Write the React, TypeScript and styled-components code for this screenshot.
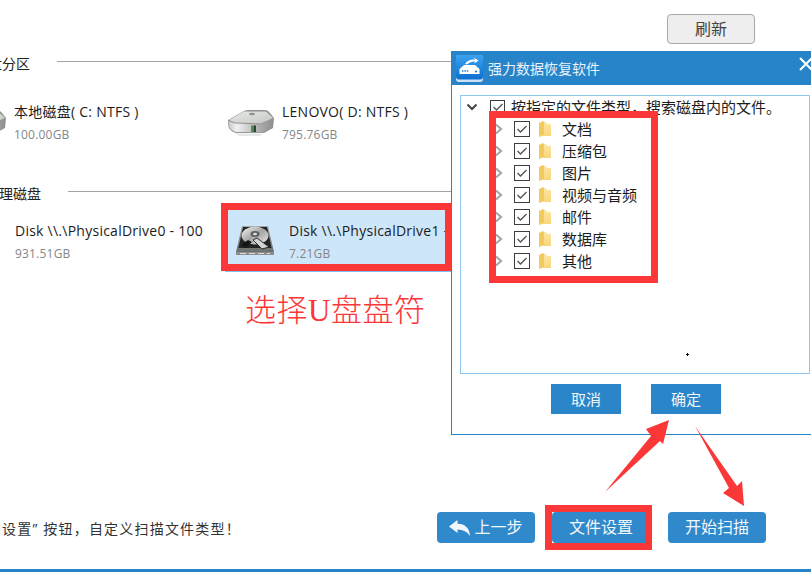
import React from "react";
import styled, { createGlobalStyle } from "styled-components";

const GlobalStyle = createGlobalStyle`
  html, body { margin: 0; padding: 0; background: #fff; }
  * { box-sizing: border-box; }
`;

const FONT = `"Open Sans", "Noto Sans CJK SC", sans-serif`;
const BLUE = "#2884c8";
const RED = "#fc3737";

const Page = styled.div`
  position: relative;
  width: 811px;
  height: 572px;
  overflow: hidden;
  display: flex;
  flex-direction: column;
  background: #fff;
  font-family: ${FONT};
  color: #222;
`;

const TopBar = styled.div`
  height: 44px;
  padding: 14px 56px 0 0;
  display: flex;
  justify-content: flex-end;
`;

const RefreshButton = styled.button`
  width: 88px;
  height: 30px;
  padding: 0;
  border: 1px solid #a8a8a8;
  border-radius: 4px;
  background: #eeeeee;
  color: #444;
  font: 16px/26px ${FONT};
`;

const SectionHead = styled.div<{ $top: number; $inset: number }>`
  margin: ${(p) => p.$top}px 0 0 ${(p) => p.$inset}px;
  height: 18px;
  display: flex;
  gap: 27px;
  font-size: 14px;
  line-height: 18px;
  white-space: nowrap;
`;

const SectionRule = styled.div`
  flex: 1;
  height: 1px;
  margin-top: 6px;
  background: #a4a4a4;
`;

const DriveGrid = styled.div<{ $top: number; $inset: number; $columns: string }>`
  margin: ${(p) => p.$top}px 0 0 ${(p) => p.$inset}px;
  display: grid;
  grid-template-columns: ${(p) => p.$columns};
`;

const VolumeItem = styled.div`
  display: flex;
  align-items: flex-start;
  gap: 8px;
  height: 44px;
`;

const DiskItem = styled.div<{ $selected?: boolean }>`
  display: flex;
  align-items: flex-start;
  gap: 15px;
  height: 63px;
  padding: 10px 0 0 10px;
  border: 1px solid ${(p) => (p.$selected ? "#7fc0f0" : "transparent")};
  background: ${(p) => (p.$selected ? "#cee6f9" : "transparent")};
`;

const DriveIconSlot = styled.div<{ $top: number }>`
  flex: none;
  display: flex;
  margin-top: ${(p) => p.$top}px;
`;

const DriveText = styled.div`
  white-space: nowrap;
`;

const DriveName = styled.div`
  font-size: 14px;
  line-height: 22px;
  letter-spacing: 0.25px;
  color: #1c1c1c;
`;

const DriveSize = styled.div`
  margin-top: 1px;
  font-size: 12px;
  line-height: 22px;
  letter-spacing: 0.2px;
  color: #868686;
`;

const Footer = styled.div`
  margin-top: auto;
  height: 31px;
  padding: 0 45px 0 2px;
  display: flex;
  align-items: center;
`;

const Hint = styled.div`
  font-size: 14px;
  letter-spacing: 1.2px;
  color: #333;
  white-space: nowrap;
`;

const FooterButtons = styled.div`
  margin-left: auto;
  display: flex;
  gap: 17px;
`;

const ActionButton = styled.button<{ $gapAfter?: number }>`
  width: 98px;
  height: 31px;
  margin-right: ${(p) => p.$gapAfter ?? 0}px;
  padding: 0;
  display: flex;
  align-items: center;
  justify-content: center;
  gap: 4px;
  border: 0;
  border-radius: 4px;
  background: #2f89cb;
  color: #f2f7fb;
  font: 16px/31px ${FONT};
`;

const BottomBar = styled.div`
  height: 3px;
  margin-top: 26px;
  background: ${BLUE};
`;

const Dialog = styled.section`
  position: absolute;
  left: 451px;
  top: 51px;
  width: 370px;
  height: 384px;
  display: flex;
  flex-direction: column;
  border: 1px solid ${BLUE};
  background: #fff;
`;

const TitleBar = styled.header`
  flex: none;
  height: 34px;
  margin-top: -1px;
  padding-left: 4px;
  display: flex;
  align-items: center;
  gap: 5px;
  background: ${BLUE};
  color: #e9f3fb;
  font-size: 14px;
`;

const CloseMark = styled.svg`
  margin: -8px 7px 0 auto;
`;

const TreePanel = styled.div`
  width: 350px;
  height: 279px;
  margin: 10px 0 0 8px;
  border: 1px solid #90c9f0;
`;

const TreeRow = styled.div<{ $indent: number }>`
  height: 22px;
  padding-left: ${(p) => p.$indent}px;
  display: flex;
  align-items: center;
  font-size: 15px;
  color: #1c1c1c;
  white-space: nowrap;
`;

const TreeLabel = styled.span`
  margin-top: -2px;
`;

const Toggle = styled.svg<{ $after: number }>`
  flex: none;
  margin-right: ${(p) => p.$after}px;
`;

const CheckBox = styled.span<{ $size: number; $after: number }>`
  flex: none;
  width: ${(p) => p.$size}px;
  height: ${(p) => p.$size}px;
  margin-right: ${(p) => p.$after}px;
  display: flex;
  align-items: center;
  justify-content: center;
  border: 1px solid #3d3d3d;
  background: #fff;
`;

const FolderSlot = styled.span`
  flex: none;
  display: flex;
  margin-right: 11px;
`;

const DialogActions = styled.div`
  margin-top: 10px;
  display: flex;
  justify-content: center;
  gap: 30px;
`;

const DialogButton = styled.button`
  width: 70px;
  height: 30px;
  padding: 0;
  border: 0;
  background: #2a86c9;
  color: #f0f6fb;
  font: 15px/30px ${FONT};
`;

const RedFrame = styled.div<{ $x: number; $y: number; $w: number; $h: number; $t: number }>`
  position: absolute;
  left: ${(p) => p.$x}px;
  top: ${(p) => p.$y}px;
  width: ${(p) => p.$w}px;
  height: ${(p) => p.$h}px;
  border: ${(p) => p.$t}px solid ${RED};
  pointer-events: none;
`;

const Callout = styled.div`
  position: absolute;
  left: 245px;
  top: 289px;
  color: ${RED};
  font-family: "Liberation Serif", "Noto Sans CJK SC", serif;
  font-size: 31px;
  font-weight: 300;
  letter-spacing: 0.5px;
  line-height: 44px;
  white-space: nowrap;
`;

const ArrowLayer = styled.svg`
  position: absolute;
  left: 0;
  top: 0;
`;

const CursorDot = styled.div`
  position: absolute;
  left: 686px;
  top: 353px;
  width: 3px;
  height: 3px;
  background:
    linear-gradient(#111, #111) center / 3px 1px no-repeat,
    linear-gradient(#111, #111) center / 1px 3px no-repeat;
`;

const VolumeIcon = ({ id }: { id: string }) => (
  <svg width="47" height="28" viewBox="0 0 47 28">
    <defs>
      <linearGradient id={`${id}Top`} x1="0" y1="0" x2="1" y2="1">
        <stop offset="0" stopColor="#e8eae6" />
        <stop offset="1" stopColor="#c4c7c2" />
      </linearGradient>
      <linearGradient id={`${id}Front`} x1="0" y1="0" x2="1" y2="0">
        <stop offset="0" stopColor="#c6c6c6" />
        <stop offset="0.18" stopColor="#f2f2f2" />
        <stop offset="0.6" stopColor="#b8b8b8" />
        <stop offset="1" stopColor="#8e8e8e" />
      </linearGradient>
    </defs>
    <path d="M1 12 L17 3 Q19 2 22 2 L38 2 Q41 2 43 5 L47 10 L46 20 L37 25 L9 25 Q2 23 1 17 Z" fill="#8f918f" />
    <path d="M2 12 L17 3.5 L39 3.5 L46 10 L34 15.5 L8 14.5 Z" fill={`url(#${id}Top)`} />
    <ellipse cx="25" cy="6" rx="3" ry="1.3" fill="#8e918f" />
    <path d="M1.5 13 L8 15.5 L34 16.5 L46 10.5 L45.5 19.5 L36 24.5 L9 24 Q2.5 22 1.5 17 Z" fill={`url(#${id}Front)`} />
    <rect x="24" y="17.5" width="2.6" height="6.5" fill="#3e9a4a" />
    <rect x="26.6" y="17.5" width="2.4" height="6.5" fill="#3a3a3a" />
    <path d="M8 25.5 L36 25.5 L33 28 L12 28 Z" fill="#e8e8e8" />
  </svg>
);

const DiskIcon = ({ id }: { id: string }) => (
  <svg width="38" height="31" viewBox="0 0 38 31">
    <defs>
      <linearGradient id={`${id}Plat`} x1="0" y1="0" x2="1" y2="1">
        <stop offset="0" stopColor="#f8f8f8" />
        <stop offset="0.5" stopColor="#a4a4a4" />
        <stop offset="1" stopColor="#ececec" />
      </linearGradient>
      <linearGradient id={`${id}Base`} x1="0" y1="0" x2="0" y2="1">
        <stop offset="0" stopColor="#a6a8a8" />
        <stop offset="1" stopColor="#6d6f6f" />
      </linearGradient>
    </defs>
    <path d="M6 1 L32 1 L38 27 L0 27 Z" fill={`url(#${id}Base)`} />
    <path d="M7 2 L31 2 L35.5 23 L2.5 23 Z" fill="#232525" />
    <ellipse cx="19" cy="10.5" rx="13.5" ry="9" fill={`url(#${id}Plat)`} />
    <ellipse cx="19" cy="9" rx="4.5" ry="3" fill="#5d6060" />
    <ellipse cx="19" cy="9" rx="2" ry="1.3" fill="#dcdcdc" />
    <path d="M5 20 L12 15 L16 17 L10 23 Z" fill="#141616" />
    <path d="M33 22 L21 13 L17 15 L26 24 Z" fill="#d2d4d4" stroke="#222" strokeWidth="0.9" />
    <path d="M0 27 L38 27 L38 30 L0 30 Z" fill="#8c8e8e" />
    <path d="M4 28.5 H34" stroke="#dcdcdc" strokeWidth="1" strokeDasharray="6 3" />
  </svg>
);

const FolderIcon = ({ id }: { id: string }) => (
  <svg width="12" height="16" viewBox="0 0 12 16">
    <defs>
      <linearGradient id={id} x1="0" y1="0" x2="0" y2="1">
        <stop offset="0" stopColor="#fbe6a6" />
        <stop offset="1" stopColor="#f8d67a" />
      </linearGradient>
    </defs>
    <path d="M4 1 L7 1 L8 3 L12 3 L12 15 L4 15 Z" fill={`url(#${id})`} />
    <path d="M0 2 L4 0 L5 1 L5 14 L0 16 Z" fill="#f3c95e" />
  </svg>
);

const Check = () => (
  <svg width="12" height="10" viewBox="0 0 12 10">
    <path d="M1.5 5 L4.5 8 L10.5 2" fill="none" stroke="#555" strokeWidth="1.4" />
  </svg>
);

const AppLogo = () => (
  <svg width="27" height="27" viewBox="0 0 27 27">
    <defs>
      <linearGradient id="logo" x1="0" y1="0" x2="0" y2="1">
        <stop offset="0" stopColor="#3aa3ee" />
        <stop offset="1" stopColor="#0d6fd0" />
      </linearGradient>
    </defs>
    <rect width="27" height="27" rx="3" fill="#cfe2f3" />
    <rect width="27" height="24.5" rx="3" fill="url(#logo)" />
    <path d="M3.5 14 L8 10 L19 10 L23.5 14 L23.5 19 L3.5 19 Z" fill="#fff" />
    <path d="M9 9 Q12 4 19 4.5 L17.5 2.5 L22.5 5.5 L18.5 8.5 L19 6.5 Q14 6.5 11 9.5 Z" fill="#fff" />
    <path d="M6 16 H13" stroke="#1b7bd8" strokeWidth="1.6" strokeDasharray="1.4 1" />
    <circle cx="20" cy="16.5" r="1.1" fill="#1b7bd8" />
  </svg>
);

const BackArrow = () => (
  <svg width="21" height="16" viewBox="0 0 21 16">
    <path d="M0 6.5 L8.5 0 L8.5 3.8 Q20 4 21 16 Q17 9.5 8.5 9.5 L8.5 13 Z" fill="#f2f7fb" />
  </svg>
);

const categories = ["文档", "压缩包", "图片", "视频与音频", "邮件", "数据库", "其他"];

export default function App() {
  return (
    <Page>
      <GlobalStyle />
      <TopBar>
        <RefreshButton>刷新</RefreshButton>
      </TopBar>

      <SectionHead $top={11} $inset={-12}>
        <span>盘分区</span>
        <SectionRule />
      </SectionHead>
      <DriveGrid $top={28} $inset={-41} $columns="268px 268px">
        <VolumeItem>
          <DriveIconSlot $top={7}><VolumeIcon id="volC" /></DriveIconSlot>
          <DriveText>
            <DriveName>本地磁盘( C: NTFS )</DriveName>
            <DriveSize>100.00GB</DriveSize>
          </DriveText>
        </VolumeItem>
        <VolumeItem>
          <DriveIconSlot $top={7}><VolumeIcon id="volD" /></DriveIconSlot>
          <DriveText>
            <DriveName>LENOVO( D: NTFS )</DriveName>
            <DriveSize>795.76GB</DriveSize>
          </DriveText>
        </VolumeItem>
      </DriveGrid>

      <SectionHead $top={40} $inset={-15}>
        <span>物理磁盘</span>
        <SectionRule />
      </SectionHead>
      <DriveGrid $top={6} $inset={-49} $columns="274px 300px">
        <DiskItem>
          <DriveIconSlot $top={5}><DiskIcon id="disk0" /></DriveIconSlot>
          <DriveText>
            <DriveName>Disk \\.\PhysicalDrive0 - 100</DriveName>
            <DriveSize>931.51GB</DriveSize>
          </DriveText>
        </DiskItem>
        <DiskItem $selected>
          <DriveIconSlot $top={5}><DiskIcon id="disk1" /></DriveIconSlot>
          <DriveText>
            <DriveName>Disk \\.\PhysicalDrive1 - 7GB</DriveName>
            <DriveSize>7.21GB</DriveSize>
          </DriveText>
        </DiskItem>
      </DriveGrid>

      <Footer>
        <Hint>设置” 按钮，自定义扫描文件类型！</Hint>
        <FooterButtons>
          <ActionButton><BackArrow />上一步</ActionButton>
          <ActionButton $gapAfter={1}>文件设置</ActionButton>
          <ActionButton>开始扫描</ActionButton>
        </FooterButtons>
      </Footer>
      <BottomBar />

      <Dialog>
        <TitleBar>
          <AppLogo />
          强力数据恢复软件
          <CloseMark width="14" height="14" viewBox="0 0 14 14">
            <path d="M1 1 L13 13 M13 1 L1 13" stroke="#fff" strokeWidth="2" />
          </CloseMark>
        </TitleBar>
        <TreePanel>
          <TreeRow $indent={5}>
            <Toggle $after={12} width="12" height="8" viewBox="0 0 12 8">
              <path d="M1.5 1.5 L6 6 L10.5 1.5" fill="none" stroke="#444" strokeWidth="2" />
            </Toggle>
            <CheckBox $size={15} $after={6}><Check /></CheckBox>
            <TreeLabel>按指定的文件类型，搜索磁盘内的文件。</TreeLabel>
          </TreeRow>
          {categories.map((name) => (
            <TreeRow key={name} $indent={33}>
              <Toggle $after={11} width="9" height="12" viewBox="0 0 9 12">
                <path d="M2 1.5 L7 6 L2 10.5" fill="none" stroke="#a6a6a6" strokeWidth="2.2" />
              </Toggle>
              <CheckBox $size={16} $after={9}><Check /></CheckBox>
              <FolderSlot><FolderIcon id={`folder-${name}`} /></FolderSlot>
              <TreeLabel>{name}</TreeLabel>
            </TreeRow>
          ))}
        </TreePanel>
        <DialogActions>
          <DialogButton>取消</DialogButton>
          <DialogButton>确定</DialogButton>
        </DialogActions>
      </Dialog>

      <CursorDot />
      <Callout>选择U盘盘符</Callout>
      <RedFrame $x={221} $y={203} $w={231} $h={68} $t={7} />
      <RedFrame $x={489} $y={111} $w={169} $h={172} $t={7} />
      <RedFrame $x={545} $y={505} $w={107} $h={45} $t={7} />
      <ArrowLayer width="811" height="572" viewBox="0 0 811 572">
        <polygon points="605,492 651,436 646,429 669,420 663,444 660,441" fill={RED} />
        <polygon points="695,426 737,486 742,481 744,506 723,493 729,488" fill={RED} />
      </ArrowLayer>
    </Page>
  );
}
